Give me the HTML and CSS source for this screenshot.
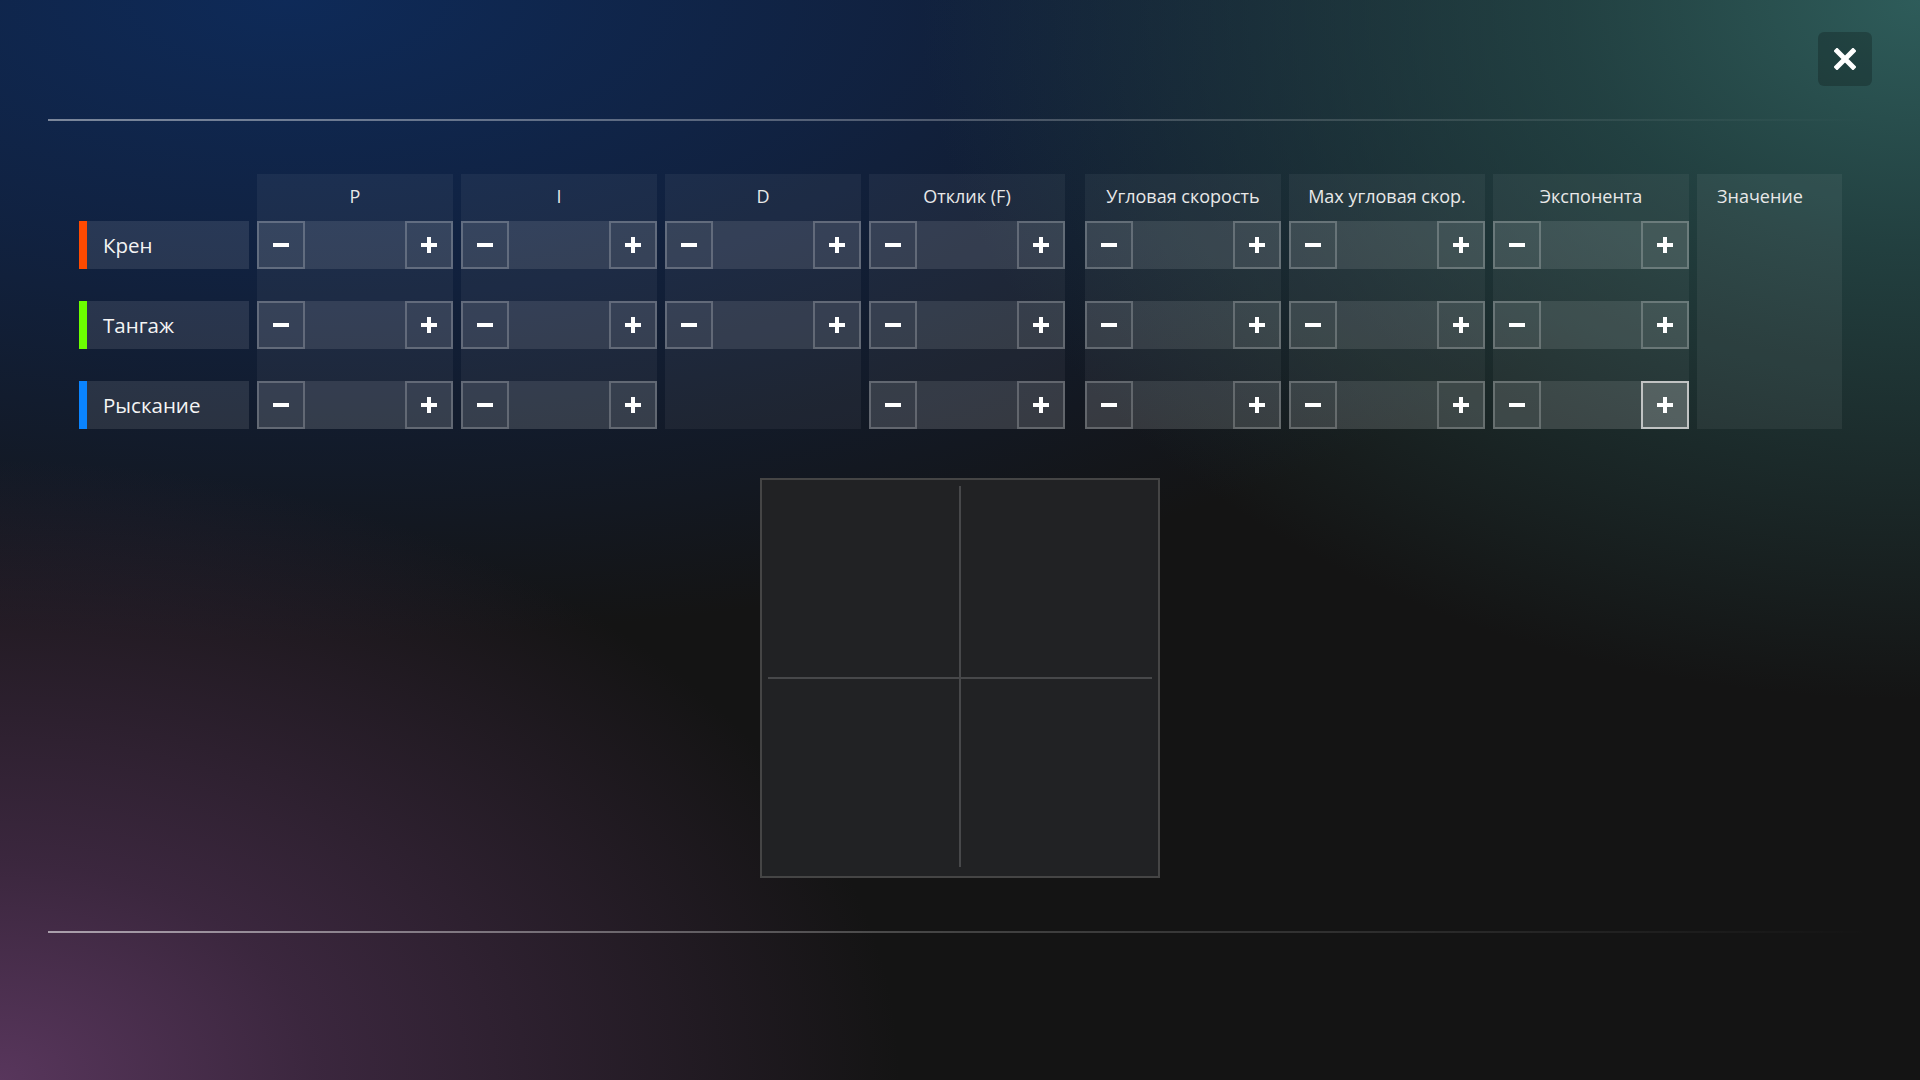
FILE: index.html
```html
<!DOCTYPE html>
<html lang="ru">
<head>
<meta charset="utf-8">
<title>Настройки PID</title>
<link rel="stylesheet" href="styles.css">
</head>
<body>
<div class="page">
  <div class="topbar">
    <button class="close" aria-label="Закрыть">
      <svg width="22" height="22" viewBox="0 0 22 22"><path d="M3 3 L19 19 M19 3 L3 19" stroke="#fff" stroke-width="5" stroke-linecap="square"/></svg>
    </button>
  </div>
  <div class="divider"></div>

  <div class="table">
    <div class="labels">
      <div class="label"><span class="bar roll"></span><span class="name">Крен</span></div>
      <div class="label"><span class="bar pitch"></span><span class="name">Тангаж</span></div>
      <div class="label"><span class="bar yaw"></span><span class="name">Рыскание</span></div>
    </div>

    <div class="col">
      <div class="col-head">P</div>
      <div class="col-body">
        <div class="stepper"><span class="btn minus"><i></i></span><span class="btn plus"><i></i><b></b></span></div>
        <div class="stepper"><span class="btn minus"><i></i></span><span class="btn plus"><i></i><b></b></span></div>
        <div class="stepper"><span class="btn minus"><i></i></span><span class="btn plus"><i></i><b></b></span></div>
      </div>
    </div>
    <div class="col">
      <div class="col-head">I</div>
      <div class="col-body">
        <div class="stepper"><span class="btn minus"><i></i></span><span class="btn plus"><i></i><b></b></span></div>
        <div class="stepper"><span class="btn minus"><i></i></span><span class="btn plus"><i></i><b></b></span></div>
        <div class="stepper"><span class="btn minus"><i></i></span><span class="btn plus"><i></i><b></b></span></div>
      </div>
    </div>
    <div class="col">
      <div class="col-head">D</div>
      <div class="col-body">
        <div class="stepper"><span class="btn minus"><i></i></span><span class="btn plus"><i></i><b></b></span></div>
        <div class="stepper"><span class="btn minus"><i></i></span><span class="btn plus"><i></i><b></b></span></div>
        <div class="empty"></div>
      </div>
    </div>
    <div class="col">
      <div class="col-head">Отклик (F)</div>
      <div class="col-body">
        <div class="stepper"><span class="btn minus"><i></i></span><span class="btn plus"><i></i><b></b></span></div>
        <div class="stepper"><span class="btn minus"><i></i></span><span class="btn plus"><i></i><b></b></span></div>
        <div class="stepper"><span class="btn minus"><i></i></span><span class="btn plus"><i></i><b></b></span></div>
      </div>
    </div>

    <div class="col group-start">
      <div class="col-head">Угловая скорость</div>
      <div class="col-body">
        <div class="stepper"><span class="btn minus"><i></i></span><span class="btn plus"><i></i><b></b></span></div>
        <div class="stepper"><span class="btn minus"><i></i></span><span class="btn plus"><i></i><b></b></span></div>
        <div class="stepper"><span class="btn minus"><i></i></span><span class="btn plus"><i></i><b></b></span></div>
      </div>
    </div>
    <div class="col">
      <div class="col-head">Max угловая скор.</div>
      <div class="col-body">
        <div class="stepper"><span class="btn minus"><i></i></span><span class="btn plus"><i></i><b></b></span></div>
        <div class="stepper"><span class="btn minus"><i></i></span><span class="btn plus"><i></i><b></b></span></div>
        <div class="stepper"><span class="btn minus"><i></i></span><span class="btn plus"><i></i><b></b></span></div>
      </div>
    </div>
    <div class="col">
      <div class="col-head">Экспонента</div>
      <div class="col-body">
        <div class="stepper"><span class="btn minus"><i></i></span><span class="btn plus"><i></i><b></b></span></div>
        <div class="stepper"><span class="btn minus"><i></i></span><span class="btn plus"><i></i><b></b></span></div>
        <div class="stepper"><span class="btn minus"><i></i></span><span class="btn plus active"><i></i><b></b></span></div>
      </div>
    </div>
    <div class="col value">
      <div class="col-head left">Значение</div>
    </div>
  </div>

  <div class="chart-wrap">
    <div class="chart">
      <svg width="396" height="396" viewBox="0 0 396 396">
        <line x1="198" y1="6" x2="198" y2="387" stroke="#47484a" stroke-width="2"/>
        <line x1="6" y1="198" x2="390" y2="198" stroke="#47484a" stroke-width="2"/>
      </svg>
    </div>
  </div>

  <div class="divider bottom"></div>
</div>
</body>
</html>
```
FILE: styles.css
```css
html, body {
  margin: 0;
  padding: 0;
}
body {
  width: 1920px;
  height: 1080px;
  overflow: hidden;
  font-family: "Open Sans", "Noto Sans", sans-serif;
  color: #f0f0f0;
  background:
    radial-gradient(ellipse 900px 620px at 0% 100%, rgba(88, 54, 92, 1) 0%, rgba(72, 45, 76, 0.75) 35%, rgba(20, 20, 20, 0) 100%),
    radial-gradient(ellipse 1000px 700px at 100% 0%, rgba(46, 92, 90, 1) 0%, rgba(38, 76, 76, 0.78) 35%, rgba(20, 20, 20, 0) 100%),
    radial-gradient(ellipse 1500px 640px at 15% 0%, rgba(14, 42, 88, 1) 0%, rgba(16, 36, 72, 0.85) 40%, rgba(20, 20, 20, 0) 100%),
    #141414;
}
.page {
  box-sizing: border-box;
  height: 1080px;
  padding: 32px 48px 0;
  display: flex;
  flex-direction: column;
}
.topbar {
  display: flex;
  justify-content: flex-end;
  height: 54px;
}
.close {
  width: 54px;
  height: 54px;
  border: none;
  border-radius: 6px;
  background: rgba(0, 0, 0, 0.22);
  display: flex;
  align-items: center;
  justify-content: center;
  padding: 0;
}
.divider {
  margin-top: 33px;
  height: 2px;
  background: linear-gradient(to right, rgba(255, 255, 255, 0.45), rgba(255, 255, 255, 0.25) 50%, rgba(255, 255, 255, 0) 100%);
}
.divider.bottom {
  margin-top: 53px;
  background: linear-gradient(to right, rgba(255, 255, 255, 0.55), rgba(255, 255, 255, 0.2) 50%, rgba(255, 255, 255, 0) 100%);
}
.table {
  display: flex;
  gap: 8px;
  margin-top: 53px;
  margin-left: 31px;
  align-items: flex-start;
}
.labels {
  width: 170px;
  padding-top: 47px;
  display: flex;
  flex-direction: column;
  gap: 32px;
}
.label {
  height: 48px;
  display: flex;
}
.bar {
  width: 8px;
  flex: none;
}
.bar.roll { background: #ff4a00; }
.bar.pitch { background: #6cff00; }
.bar.yaw { background: #0a84ff; }
.name {
  flex: 1;
  background: rgba(255, 255, 255, 0.1);
  display: flex;
  align-items: center;
  padding-left: 16px;
  font-size: 20.5px;
  color: #f4f4f4;
}
.col {
  width: 196px;
  height: 255px;
  background: rgba(255, 255, 255, 0.05);
  display: flex;
  flex-direction: column;
}
.col.group-start {
  margin-left: 12px;
}
.col.value {
  width: 145px;
  background: rgba(255, 255, 255, 0.06);
}
.col-head {
  box-sizing: border-box;
  height: 47px;
  padding-bottom: 3px;
  flex: none;
  display: flex;
  align-items: center;
  justify-content: center;
  font-size: 18px;
  color: #e8e8e8;
}
.col-head.left {
  justify-content: flex-start;
  padding-left: 20px;
}
.col-body {
  display: flex;
  flex-direction: column;
  gap: 32px;
}
.stepper, .empty {
  height: 48px;
}
.stepper {
  display: flex;
  justify-content: space-between;
  background: rgba(255, 255, 255, 0.1);
}
.btn {
  box-sizing: border-box;
  width: 48px;
  height: 48px;
  border: 2px solid rgba(255, 255, 255, 0.22);
  position: relative;
  background: rgba(255, 255, 255, 0.01);
}
.btn i, .btn b {
  position: absolute;
  background: #fff;
}
.btn i {
  width: 16px;
  height: 4px;
  left: 14px;
  top: 20px;
}
.btn b {
  width: 4px;
  height: 16px;
  left: 20px;
  top: 14px;
}
.btn.active {
  border-color: rgba(220, 220, 220, 0.8);
  background: rgba(255, 255, 255, 0.12);
}
.chart-wrap {
  margin-top: 49px;
  display: flex;
  justify-content: center;
}
.chart {
  width: 400px;
  height: 400px;
  box-sizing: border-box;
  border: 2px solid #454545;
  background: #212224;
}
.chart svg {
  display: block;
}
```
